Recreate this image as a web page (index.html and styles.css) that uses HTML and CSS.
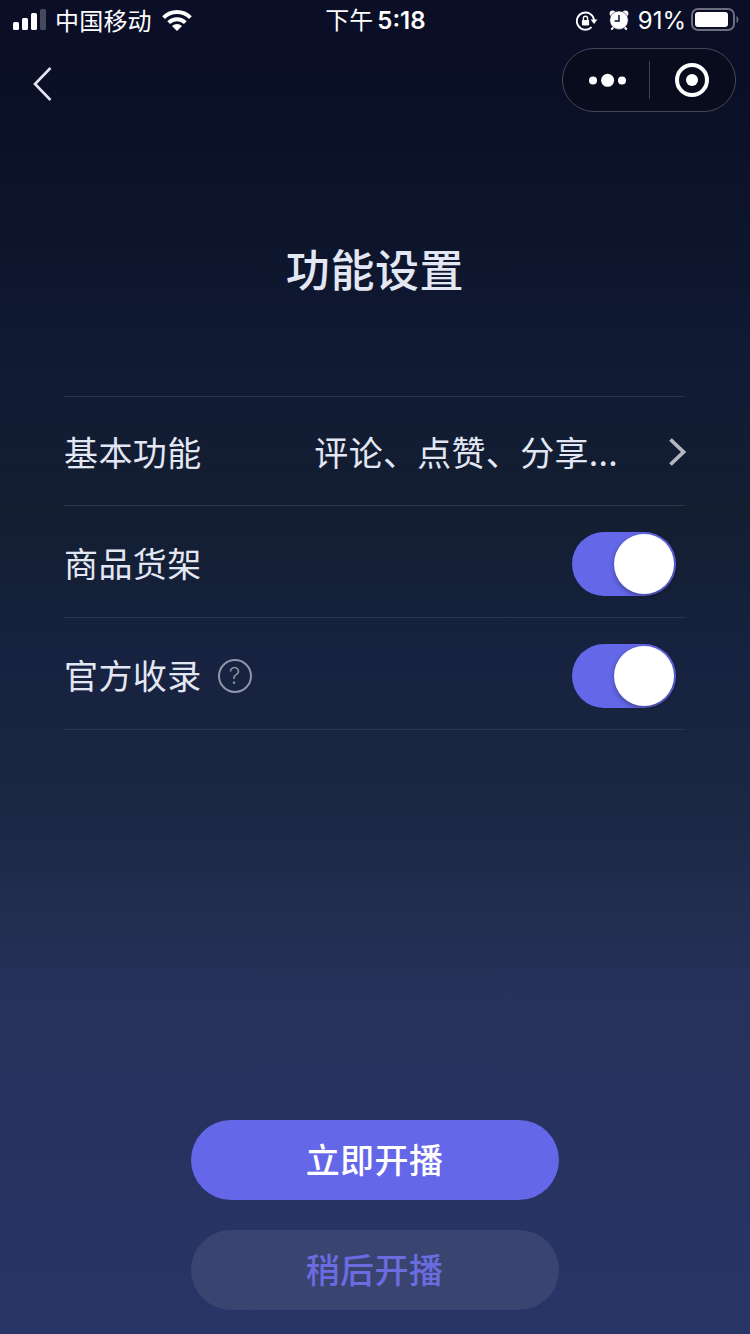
FILE: index.html
```html
<!DOCTYPE html>
<html lang="zh-CN">
<head>
    <meta charset="UTF-8">
    <title>功能设置</title>
    <link rel="stylesheet" href="styles.css">
</head>
<body>
    <div class="status-bar">
        <div class="status-left">
            <svg class="signal" width="34" height="22" viewBox="0 0 34 22" fill="#fff">
                <rect x="0" y="13" width="6" height="8" rx="1.5"/>
                <rect x="9" y="9" width="6" height="12" rx="1.5"/>
                <rect x="18" y="4" width="6" height="17" rx="1.5"/>
                <rect x="27" y="0" width="6" height="21" rx="1.5" opacity="0.25"/>
            </svg>
            <span class="carrier">中国移动</span>
            <svg class="wifi" width="30" height="22" viewBox="0 0 30 22">
                <g fill="none" stroke="#fff" stroke-width="4">
                    <path d="M1.6 8.6 A19 19 0 0 1 28.4 8.6"/>
                    <path d="M6.7 13.7 A11.8 11.8 0 0 1 23.3 13.7"/>
                </g>
                <path d="M10 17 A7 7 0 0 1 20 17 L15 22 Z" fill="#fff"/>
            </svg>
        </div>
        <div class="time">下午<span class="clock">5:18</span></div>
        <div class="status-right">
            <svg class="lock" width="22" height="20" viewBox="0 0 22 20">
                <path d="M18 9 A8.6 8.6 0 1 0 15.6 16.1" fill="none" stroke="#fff" stroke-width="1.9"/>
                <path d="M14.6 8.6 H21.4 L18 13 Z" fill="#fff"/>
                <rect x="5.9" y="9" width="7.2" height="5.4" rx="0.8" fill="#fff"/>
                <path d="M7.4 9.5 V7.4 A2.1 2.1 0 0 1 11.6 7.4 V9.5" fill="none" stroke="#fff" stroke-width="1.4"/>
            </svg>
            <svg class="alarm" width="20" height="20" viewBox="0 0 20 20">
                <circle cx="3.6" cy="3.4" r="3" fill="#fff"/>
                <circle cx="16.4" cy="3.4" r="3" fill="#fff"/>
                <path d="M4.6 17 L2.8 19 M15.4 17 L17.2 19" stroke="#fff" stroke-width="2" stroke-linecap="round"/>
                <circle cx="10" cy="10.2" r="9.2" fill="#fff" stroke="#0a0e26" stroke-width="0.5"/>
                <path d="M10 5 V11 H5.6" fill="none" stroke="#0a0e26" stroke-width="1.5"/>
            </svg>
            <span class="percent">91%</span>
            <svg class="battery" width="48" height="24" viewBox="0 0 48 24">
                <rect x="1" y="1" width="42" height="21" rx="6" fill="none" stroke="#6c6e7d" stroke-width="2"/>
                <rect x="4" y="4" width="33" height="15" rx="3" fill="#fff"/>
                <path d="M45.5 8 C48 9 48 14 45.5 15 Z" fill="#6c6e7d"/>
            </svg>
        </div>
    </div>

    <div class="nav-bar">
        <svg class="back" width="20" height="36" viewBox="0 0 20 36">
            <path d="M17.5 2 L2 18 L17.5 34" fill="none" stroke="#e3e6f2" stroke-width="2.6"/>
        </svg>
        <div class="capsule">
            <svg class="dots" width="38" height="14" viewBox="0 0 38 14" fill="#fff">
                <circle cx="4" cy="7.5" r="4"/>
                <circle cx="18.6" cy="7.3" r="6.5"/>
                <circle cx="33" cy="7.5" r="4"/>
            </svg>
            <div class="capsule-line"></div>
            <svg class="target" width="34" height="34" viewBox="0 0 34 34">
                <circle cx="17" cy="17" r="15" fill="none" stroke="#fff" stroke-width="4"/>
                <circle cx="17" cy="17" r="6" fill="#fff"/>
            </svg>
        </div>
    </div>

    <h1 class="title">功能设置</h1>

    <div class="settings">
        <div class="row row-first">
            <span class="label">基本功能</span>
            <span class="value">评论、点赞、分享...</span>
            <svg class="arrow" width="19" height="30" viewBox="0 0 19 30">
                <path d="M2.5 2.5 L15.5 15 L2.5 27.5" fill="none" stroke="#b4b7bf" stroke-width="3.8"/>
            </svg>
        </div>
        <div class="row">
            <span class="label">商品货架</span>
            <div class="switch"><div class="knob"></div></div>
        </div>
        <div class="row">
            <span class="label">官方收录</span>
            <span class="help">?</span>
            <div class="switch"><div class="knob"></div></div>
        </div>
    </div>

    <div class="buttons">
        <button class="btn btn-primary">立即开播</button>
        <button class="btn btn-later">稍后开播</button>
    </div>
</body>
</html>
```
FILE: styles.css
```css
* {
    box-sizing: border-box;
}
body {
    width: 750px;
    height: 1334px;
    margin: 0;
    overflow: hidden;
    display: flex;
    flex-direction: column;
    font-family: "Noto Sans CJK SC", sans-serif;
    color: #e3e7f3;
    background: linear-gradient(#0a0e27 0, #0a1026 110px, #111b34 380px, #131e31 510px, #16223f 650px, #1b2642 790px, #222d50 910px, #28315b 1000px, #27325f 1130px, #283567 1334px);
}
svg {
    display: block;
    flex-shrink: 0;
}
.status-bar {
    height: 40px;
    display: grid;
    grid-template-columns: 1fr auto 1fr;
    align-items: center;
    padding: 0 11px 0 13px;
    color: #fff;
    font-size: 24px;
    line-height: 30px;
}
.status-left,
.status-right {
    display: flex;
    align-items: center;
}
.status-right {
    justify-content: flex-end;
}
.carrier {
    margin-left: 8px;
    letter-spacing: 0.2px;
}
.wifi {
    margin-left: 10px;
}
.time {
    padding-right: 1px;
}
.clock {
    margin-left: 4px;
    font-family: Inter, sans-serif;
    font-weight: 600;
}
.lock {
    margin-top: 1px;
}
.alarm {
    margin-left: 11px;
}
.percent {
    margin-left: 9px;
    padding-top: 2px;
    font-family: Inter, sans-serif;
    font-size: 24px;
}
.battery {
    margin-left: 5px;
}
.nav-bar {
    height: 80px;
    display: flex;
    justify-content: space-between;
    align-items: flex-start;
    padding: 8px 14px 0 33px;
}
.back {
    margin-top: 18px;
}
.capsule {
    width: 174px;
    height: 64px;
    display: flex;
    align-items: center;
    border: 1px solid #444858;
    border-radius: 32px;
    background-color: #080c1d;
}
.dots {
    margin-left: 26px;
}
.capsule-line {
    width: 1px;
    height: 38px;
    margin-left: 22px;
    background-color: #3c4050;
}
.target {
    margin-left: 25px;
}
.title {
    margin: 116px 0 0;
    line-height: 64px;
    font-size: 44px;
    font-weight: 500;
    letter-spacing: 0.6px;
    text-align: center;
}
.settings {
    margin: 96px 65px 0 64px;
    border-top: 1px solid #29334a;
}
.row {
    height: 112px;
    display: flex;
    align-items: center;
    padding-top: 4px;
    border-bottom: 1px solid #2b364d;
    font-size: 34px;
    letter-spacing: 0.4px;
}
.row-first {
    height: 109px;
    padding-top: 2px;
}
.label,
.value {
    padding-bottom: 2px;
}
.value {
    margin-left: auto;
    margin-right: 50px;
    letter-spacing: 0.3px;
}
.arrow {
    margin-right: -2px;
}
.help {
    width: 34px;
    height: 34px;
    margin-left: 16px;
    border: 2px solid #8e96a9;
    border-radius: 50%;
    line-height: 31px;
    font-family: Inter, sans-serif;
    font-size: 23px;
    font-weight: 300;
    letter-spacing: 0;
    color: #8e96a9;
    text-align: center;
}
.switch {
    width: 104px;
    height: 64px;
    margin-left: auto;
    margin-right: 9px;
    padding: 2px;
    display: flex;
    justify-content: flex-end;
    border-radius: 32px;
    background-color: #6467e8;
}
.knob {
    width: 60px;
    height: 60px;
    border-radius: 50%;
    background-color: #fff;
    box-shadow: 0 2px 5px rgba(0, 0, 0, 0.35);
}
.buttons {
    margin-top: auto;
    padding-bottom: 24px;
    display: flex;
    flex-direction: column;
    align-items: center;
    gap: 30px;
}
.btn {
    width: 368px;
    height: 80px;
    padding: 0 1px 3px 0;
    border: none;
    border-radius: 40px;
    font-family: inherit;
    font-size: 34px;
    font-weight: 500;
    letter-spacing: 0.4px;
}
.btn-primary {
    background-color: #6467e8;
    color: #fff;
}
.btn-later {
    background-color: #3a4470;
    color: #6b6ce0;
}
```
